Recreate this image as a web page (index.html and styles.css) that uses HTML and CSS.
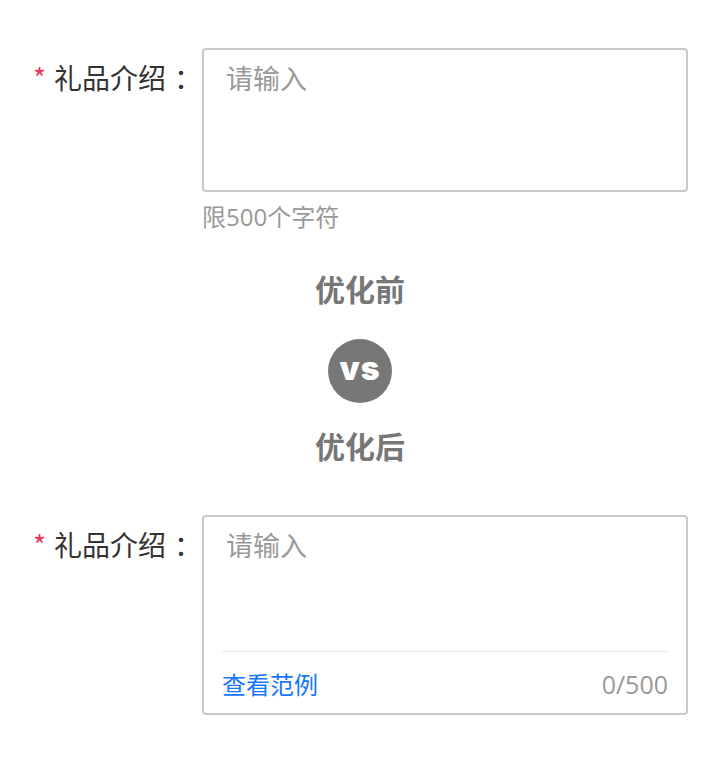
FILE: index.html
```html
<!DOCTYPE html>
<html lang="zh-CN">
<head>
<meta charset="utf-8">
<title>礼品介绍</title>
<link rel="stylesheet" href="styles.css">
</head>
<body>
<main class="page">
  <div class="row">
    <div class="label"><span class="star">*</span>礼品介绍<span class="colon">：</span></div>
    <div class="field">
      <div class="box box-plain">
        <div class="placeholder">请输入</div>
      </div>
      <div class="hint">限500个字符</div>
    </div>
  </div>

  <section class="compare">
    <div class="heading heading-before">优化前</div>
    <div class="vs">vs</div>
    <div class="heading heading-after">优化后</div>
  </section>

  <div class="row">
    <div class="label"><span class="star">*</span>礼品介绍<span class="colon">：</span></div>
    <div class="field">
      <div class="box box-footer">
        <div class="placeholder grow">请输入</div>
        <div class="footer">
          <a class="example">查看范例</a>
          <span class="count">0/500</span>
        </div>
      </div>
    </div>
  </div>
</main>
</body>
</html>
```

FILE: styles.css
```css
* { box-sizing: border-box; }
html, body { margin: 0; padding: 0; background: #fff; }
body {
  font-family: "Open Sans", "Noto Sans CJK SC", sans-serif;
  color: #333;
}
.page { padding-top: 48px; }

.row {
  display: flex;
  gap: 8px;
}
.label {
  width: 194px;
  text-align: right;
  font-family: "Noto Sans CJK SC", sans-serif;
  font-size: 28px;
  line-height: 36px;
  padding-top: 11px;
  color: #333;
  white-space: nowrap;
}
.colon {
  display: inline-block;
  width: 28px;
  padding-left: 8px;
  text-align: left;
}
.star {
  color: #e8355a;
  margin-right: 8px;
  font-size: 28px;
  vertical-align: top;
}
.field { width: 486px; }

.box {
  border: 2px solid #c9c9c9;
  border-radius: 4px;
  background: #fff;
}
.box-plain {
  height: 144px;
  padding: 10px 22px;
}
.box-footer {
  height: 200px;
  padding: 10px 18px 13px;
  display: flex;
  flex-direction: column;
}
.placeholder {
  font-family: "Noto Sans CJK SC", sans-serif;
  font-size: 27px;
  line-height: 36px;
  color: #999;
}
.box-footer .placeholder { padding-left: 4px; }
.grow { flex: 1; }

.footer {
  border-top: 1px solid #e8e8e8;
  padding-top: 16px;
  display: flex;
  justify-content: space-between;
  align-items: center;
  font-size: 24px;
  line-height: 32px;
}
.example {
  color: #1677ff;
  font-family: "Noto Sans CJK SC", sans-serif;
}
.count {
  color: #999;
  font-family: "Open Sans", sans-serif;
  font-size: 25px;
}

.hint {
  margin-top: 10px;
  font-size: 24px;
  line-height: 30px;
  color: #999;
}

.compare {
  display: flex;
  flex-direction: column;
  align-items: center;
  padding: 38px 0 52px;
}
.heading {
  font-family: "Noto Sans CJK SC", sans-serif;
  font-weight: 700;
  font-size: 30px;
  line-height: 36px;
  color: #777;
}
.vs {
  margin: 33px 0 24px;
  width: 64px;
  height: 64px;
  border-radius: 50%;
  background: #777;
  color: #fff;
  display: flex;
  align-items: center;
  justify-content: center;
  font-family: Inter, sans-serif;
  font-weight: 900;
  font-size: 32px;
  letter-spacing: 1px;
  padding-bottom: 5px;
}
```
